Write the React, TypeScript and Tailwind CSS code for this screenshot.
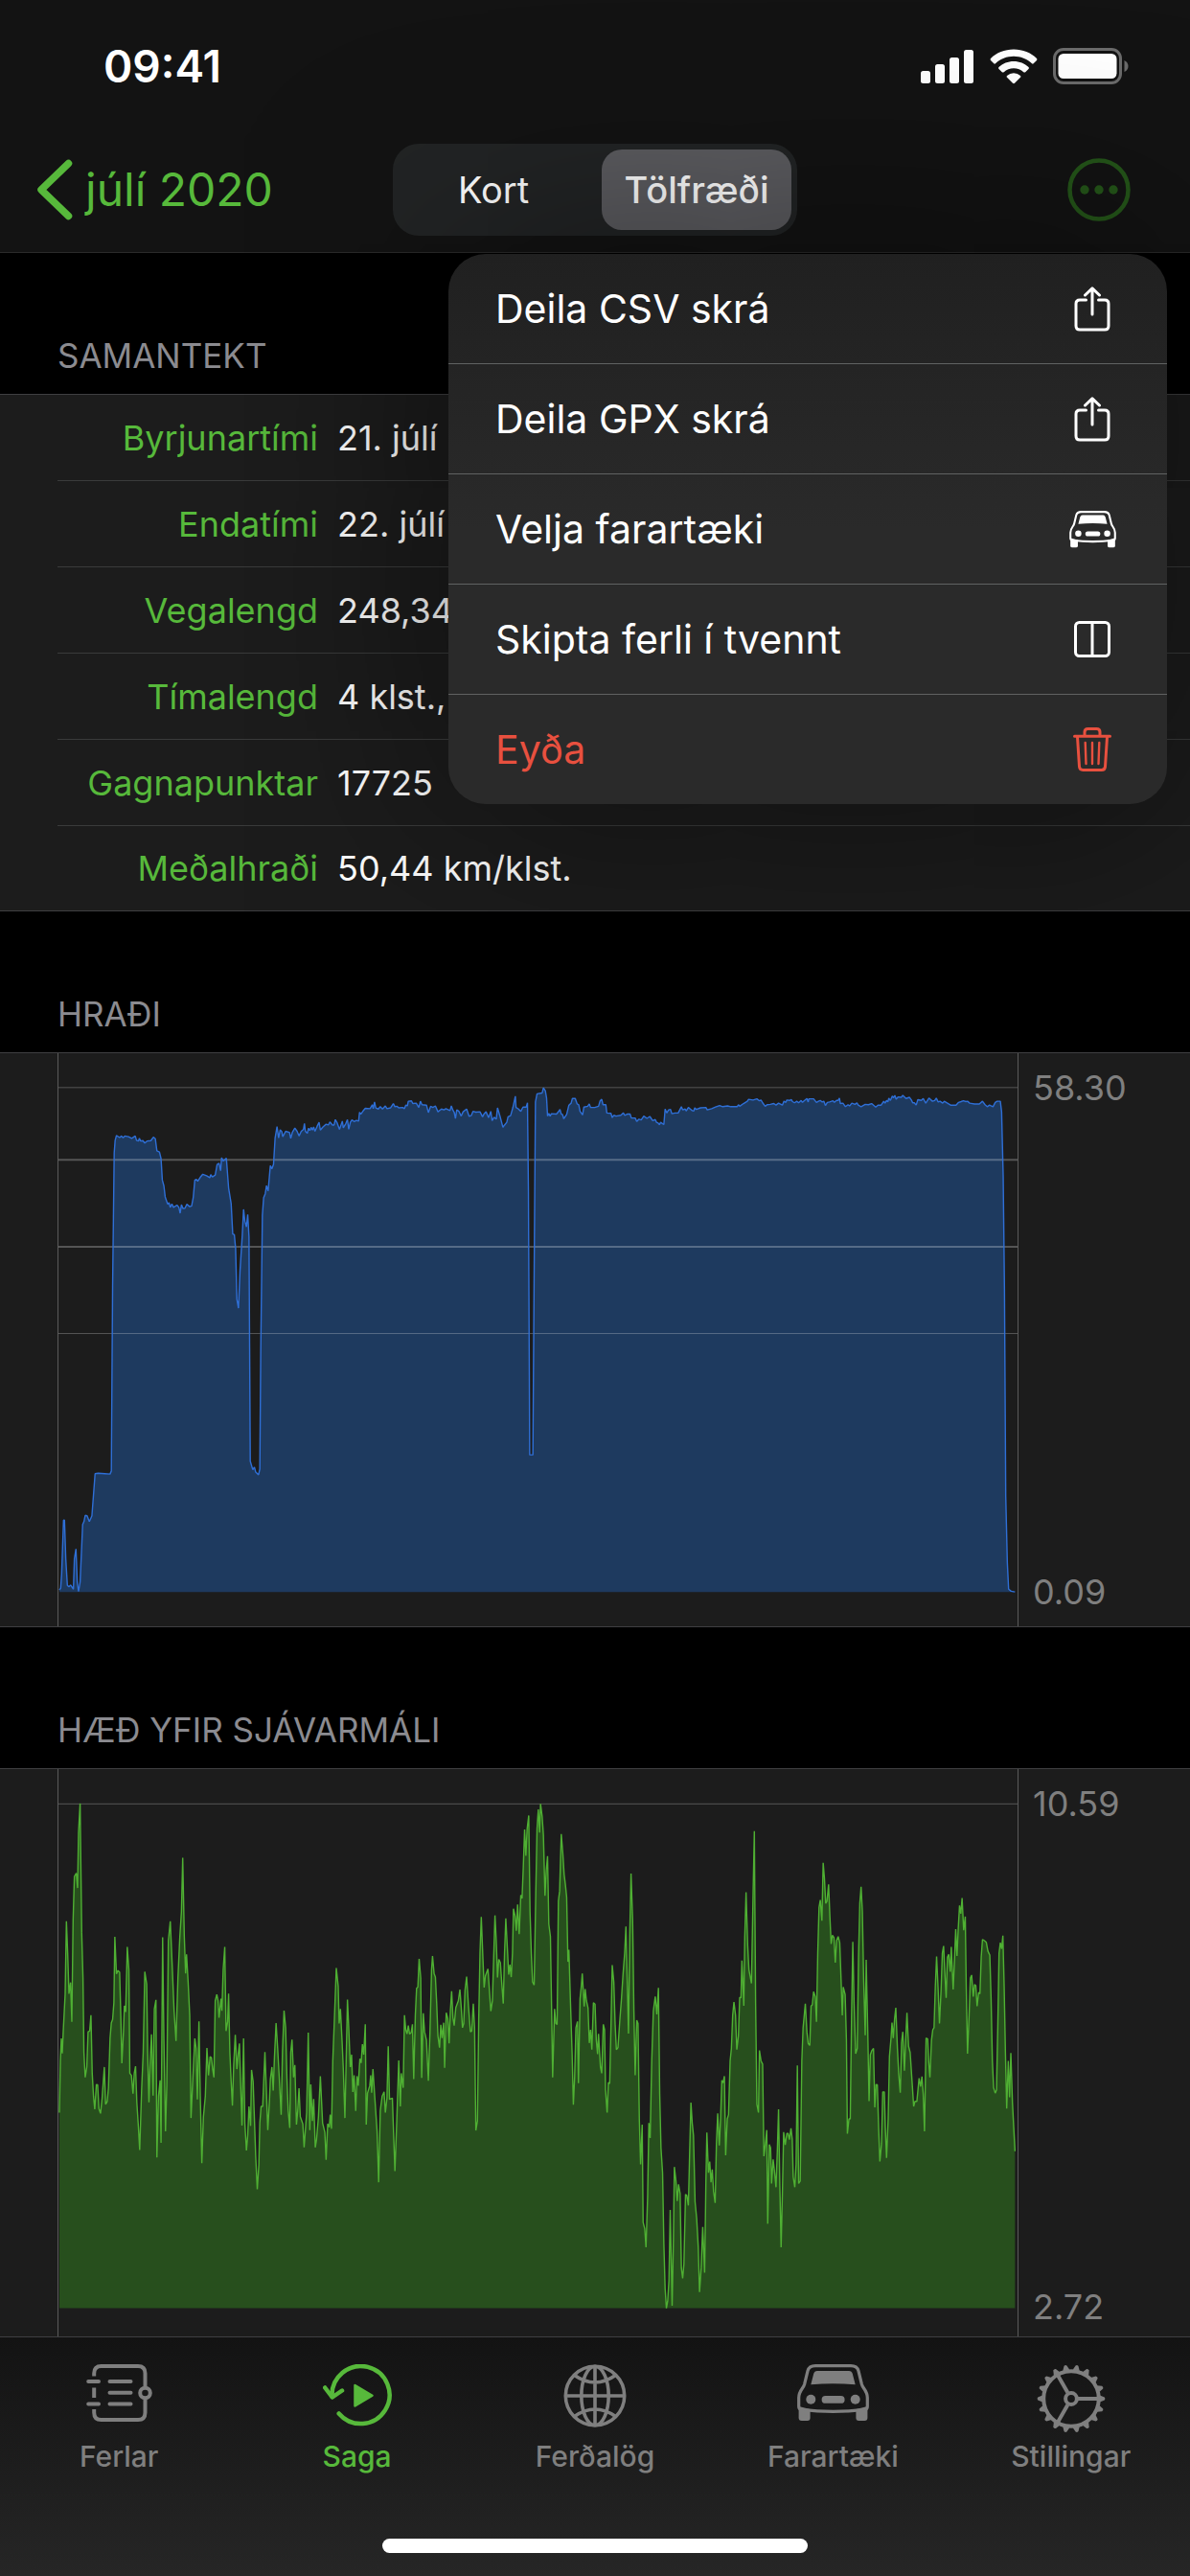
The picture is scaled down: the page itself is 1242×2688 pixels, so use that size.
import type { ReactNode } from "react";

type Run = { start: number; points: string };

// Each run lists "x,y" samples with x relative to the start of the run.
const speedRuns: Run[] = [
  {
    start: 0,
    points:
      "183,1420 187,1415 190,1380 196,1241 199,1241 203,1340 208,1408 213,1412 218,1407 223,1413 227,1418 230,1340 235,1315 239,1400 243,1424 248,1400 256,1252 260,1245 264,1229 270,1230 277,1245 285,1230 295,1122 305,1121 325,1122 342,1123 346,1115 350,640 355,300 358,268 362,256 372,261 378,257 383,262 388,257 400,259 410,263 421,257 425,268 431,270 434,263 438,270 445,269 451,275 458,270 470,269 478,260 484,264 489,295 497,298 502,315 506,370 511,385 515,413 523,432 527,428 531,440 536,431 541,440 552,434 558,440 562,455 566,433 571,443 577,442 583,432 592,438 598,436 603,415 608,370 613,368 617,373 625,363 633,355 645,359 655,364 658,356 663,362 672,357 678,330 684,327 689,346 692,313 697,321 707,314 714,390 722,430 727,508 732,510 736,545 740,675 745,698 750,600 757,510 761,445 765,475 770,490 774,458 778,515 780,800 782,1090 790,1112 795,1105 799,1118 808,1125 812,1110 815,800 820,460 824,415 829,405 833,384 838,398 845,333 850,341 855,330 860,262 866,233 871,262 876,241 881,246 884,259 893,245 905,248 909,263 914,248 922,237 929,245 935,257 942,245 949,240 952,225 955,245 961,250 965,237 969,243 973,235 977,242 981,234 985,245 992,232 998,222 1002,242 1010,234 1020,227 1027,229 1032,221 1040,229 1045,229 1049,215 1055,224 1062,240 1071,219 1074,236 1082,225 1087,215 1091,240 1096,222 1101,216 1108,220 1115,217 1122,219 1125,196 1129,201 1136,193 1143,186 1158,187 1165,177 1168,187 1172,170 1176,185 1184,188 1190,182 1197,188 1206,180 1211,187 1222,185 1231,174 1236,182 1243,181 1248,185 1260,184",
  },
  {
    start: 1200,
    points:
      "66,187 70,178 75,180 78,168 88,167 92,174 103,173 111,184 116,168 121,177 135,178 141,197 148,181 155,184 163,180 171,195 182,188 190,190 196,187 209,192 213,180 218,191 222,196 226,212 230,190 237,194 244,206 250,195 261,188 269,207 276,204 281,194 290,196 303,195 311,208 316,200 322,195 330,210 337,194 341,218 347,209 354,214 358,185 366,207 375,235 380,229 387,222 391,208 399,205 406,185 414,155 416,184 424,188 431,194 438,183 448,183 452,172 455,400 459,1074 469,1074 473,600 477,170 482,149 498,147 502,134 508,141 512,160 515,206 519,199 523,206 527,200 543,201 551,193 554,189 558,201 562,202 566,213 575,202 582,178 589,173 593,161 602,161 608,175 613,177 617,194 625,203 629,183 641,181 646,175 650,184 663,184 675,181 680,167 685,163 689,177 698,177 701,198 714,199 718,210 723,204 730,206 745,204 753,198 757,204 765,201 774,201 778,211 790,211 795,220 802,214 809,216 817,206 827,212 836,207 845,218 853,215 857,222 862,224 866,228 870,222 880,228 884,188 889,198 895,190 901,189 905,200 915,198 925,198 930,190 935,182 939,190 947,188 950,193 957,184 963,188 969,192 974,193 977,185 982,189 995,185 1012,184 1016,190 1030,187 1042,183 1055,179 1065,182 1080,180 1090,182 1110,182 1114,177 1118,181 1130,174 1142,168 1146,163 1160,165 1172,162 1180,167 1185,165 1190,172 1198,181 1204,177 1214,176 1225,174 1232,178 1240,173",
  },
  {
    start: 2400,
    points:
      "52,178 57,168 63,171 66,165 75,166 80,164 84,169 90,172 97,168 103,172 111,166 115,171 120,167 129,161 133,170 135,162 150,162 159,171 165,168 171,166 177,170 182,168 187,179 193,171 200,170 211,167 215,171 222,166 227,166 231,160 234,174 242,173 250,182 258,177 263,180 270,173 280,176 286,172 290,178 299,182 312,176 322,177 332,174 345,183 352,178 362,178 370,168 374,173 379,166 383,170 386,160 391,166 397,155 401,159 405,153 409,163 415,157 425,158 430,153 440,161 451,158 457,165 461,172 466,172 472,178 477,164 488,166 494,161 502,173 512,160 523,168 530,166 535,160 541,170 547,168 555,173 560,168 570,173 580,178 597,178 605,171 613,169 620,167 628,169 633,168 640,173 655,175 670,175 680,168 688,177 695,182 702,178 713,182 720,171 726,168 736,168 740,195 745,360 749,650 753,1180 758,1350 762,1418 770,1423 782,1425",
  },
];

const altitudeRuns: Run[] = [
  {
    start: 0,
    points:
      "183,1025 186,900 189,846 192,882 195,830 201,740 205,563 209,640 213,738 218,711 222,806 226,560 230,455 236,447 240,483 243,350 248,279 253,590 257,700 260,880 264,940 269,915 273,830 278,828 282,790 286,930 290,985 294,1017 299,957 303,958 307,1015 312,1027 317,990 324,915 328,1005 333,998 337,965 342,845 346,808 350,800 354,760 357,601 362,690 367,682 372,686 376,800 379,906 384,830 387,767 391,782 396,625 401,680 404,930 409,935 414,979 418,930 422,913 426,1000 431,1060 435,1115 441,970 446,880 451,685 457,715 460,880 464,1000 468,900 472,836 477,984 481,775 486,753 489,1133 494,985 499,947 502,1098 507,602 511,850 516,1070 520,960 525,610 531,563 537,670 543,780 549,852 555,700 561,600 566,540 570,410 575,600 579,689 582,643 587,710 592,790 596,1038 602,940 608,846 612,870 616,993 621,805 625,980 630,1147 635,1035 641,985 646,869 651,935 656,890 660,892 664,920 668,940 672,755 677,740 681,755 684,796 690,750 693,779 697,680 702,625 706,828 711,805 714,738 718,880 722,950 726,1008 730,910 735,837 740,920 744,885 748,858 752,960 756,1056 761,846 765,1050 770,1116 774,1080 778,1010 783,1057 786,922 791,950 795,1040 799,1130 804,1210 809,1150 812,1050 816,1010 821,1010 828,879 833,980 837,1067 842,1000 845,945 850,915 854,972 858,890 863,809 868,870 873,940 879,1030 883,880 888,779 893,820 897,940 901,1020 906,1062 909,880 913,849 918,940 922,910 927,1054 931,1020 935,966 939,1035 947,1052 951,1109 959,1025 964,832 969,1067 972,957 977,1045 981,992 986,1109 990,1090 996,1035 1002,937 1009,1050 1016,1072 1020,1139 1025,1052 1030,1060 1033,1030 1037,1064 1041,900 1046,800 1052,676 1058,720 1061,810 1065,775 1070,850 1074,920 1079,1038 1083,900 1087,752 1091,820 1096,915 1100,885 1104,975 1108,935 1113,1021 1117,937 1121,960 1126,895 1130,905 1134,860 1138,885 1143,812 1146,1054 1150,978 1157,960 1160,935 1163,977 1167,920 1173,990 1180,1070 1185,1193 1190,1020 1196,985 1202,975 1206,1025 1211,990 1215,865 1219,993 1228,990 1232,1080 1236,1166 1242,1040 1248,899 1253,1010 1256,930 1260,955",
  },
  {
    start: 1200,
    points:
      "62,965 66,790 70,825 74,835 78,815 82,835 87,832 91,812 95,944 100,790 104,725 108,722 112,654 117,700 120,941 125,785 129,830 135,850 141,948 146,830 151,680 154,647 159,690 163,698 167,760 171,840 176,868 180,813 184,845 189,808 192,917 197,784 202,798 206,858 210,780 214,732 218,795 222,815 227,772 235,755 240,728 244,770 248,820 252,810 256,730 261,697 267,770 273,830 277,828 282,762 286,820 290,1068 295,1045 299,800 303,640 307,553 312,650 316,723 320,695 328,678 333,735 337,780 342,755 346,650 350,549 354,610 358,699 362,655 367,663 371,710 376,762 380,640 384,556 389,630 393,692 397,668 401,698 405,640 408,533 413,550 417,586 421,523 426,594 431,500 435,508 439,430 443,342 447,405 451,340 456,308 460,540 464,640 468,710 473,717 478,500 482,340 486,293 490,349 493,280 498,310 502,355 507,502 511,440 515,406 519,570 524,600 527,740 531,940 537,775 541,810 545,812 549,515 553,490 558,353 563,400 567,450 571,475 575,505 579,661 582,632 587,760 592,880 596,1006 600,940 604,820 609,805 612,954 617,750 621,720 624,689 630,769 633,727 637,755 642,772 646,857 650,825 654,873 659,760 664,763 668,850 672,884 675,835 681,915 685,930 690,812 694,825 697,970 702,1025 706,952 710,955 714,820 718,669 723,710 727,810 731,873 736,868 742,800 747,750 752,690 757,640 761,576 765,700 769,834 773,600 777,448 782,560 786,780 790,935 795,802 799,810 803,1040 807,1150 812,1054 815,1290 820,1305 824,1350 829,1230 833,1050 837,1086 842,900 847,780 853,745 858,788 863,724 867,980 871,1110 876,1170 880,1340 884,1450 888,1497 892,1480 896,1430 900,1260 906,1491 910,1330 913,1156 918,1190 922,1238 926,1198 931,1220 935,1400 939,1425 943,1390 948,1222 952,1225 957,1249 961,1120 965,1001 969,1050 973,1080 978,1240 983,1280 988,1350 992,1458 997,1400 1002,1301 1008,1411 1012,1190 1015,1073 1020,1170 1024,1143 1028,1193 1032,1162 1036,1215 1041,1243 1045,1100 1049,1027 1054,1104 1058,1040 1062,947 1066,953 1070,937 1074,1128 1079,1040 1083,1030 1088,900 1092,870 1096,790 1100,758 1105,790 1109,873 1114,840 1118,747 1122,748 1125,658 1131,767 1134,600 1138,493 1143,620 1147,680 1155,713 1160,500 1164,346 1168,760 1172,1005 1177,1025 1180,875 1185,900 1190,908 1194,1130 1198,1105 1203,1067 1206,1293 1211,1102 1215,1110 1218,1196 1223,1138 1227,1165 1232,1205 1236,1120 1240,1017 1244,1200 1248,1350 1252,1220 1256,1072",
  },
  {
    start: 2400,
    points:
      "61,1103 66,1075 70,1075 74,1090 79,1063 83,1090 86,1180 91,1205 95,1150 99,911 103,1196 108,1190 113,900 117,820 124,762 129,830 133,858 138,863 142,768 146,765 150,733 155,745 159,806 163,640 167,530 171,512 176,562 180,422 184,460 188,520 192,515 197,474 201,550 205,618 209,597 214,603 218,663 222,610 227,600 232,615 236,700 240,790 243,722 249,740 253,850 256,1076 261,1040 265,1040 269,800 273,613 277,760 282,883 287,870 291,650 295,520 299,480 303,540 307,700 312,838 315,656 320,830 324,997 328,885 333,875 338,870 342,1012 346,957 350,958 354,1060 358,1143 363,1100 367,975 372,975 375,1060 379,1134 384,1040 388,890 393,845 396,808 400,845 404,800 408,772 413,870 417,930 422,977 426,855 430,830 435,924 439,850 443,784 448,865 453,880 459,950 464,1010 468,998 474,998 481,942 486,962 490,938 494,980 498,1070 503,845 508,847 511,900 515,940 520,850 524,825 528,820 532,720 536,648 541,730 545,810 550,730 554,640 558,623 562,690 566,748 570,650 574,643 579,685 582,625 588,728 592,660 596,582 600,647 604,580 608,525 612,545 616,507 621,585 626,552 629,720 633,883 638,790 642,700 646,693 651,745 655,716 659,718 663,768 668,735 672,738 676,650 680,607 686,610 692,614 697,635 703,645 707,750 711,900 715,965 720,978 724,970 728,820 732,640 736,615 740,630 744,598 748,720 752,880 756,1015 761,900 765,988 769,881 774,1000 778,1060 782,1118",
  },
];

const joinRuns = (runs: Run[]) =>
  runs
    .flatMap(({ start, points }) =>
      points.split(" ").map((pair) => {
        const [x, y] = pair.split(",").map(Number);
        return `${x + start},${y}`;
      }),
    )
    .join(" ");

type ChartProps = {
  label: string;
  runs: Run[];
  viewBox: string;
  base: number;
  grid: { y: number; width: number }[];
  fill: string;
  stroke: string;
  className: string;
  max: string;
  min: string;
};

function Chart({ label, runs, viewBox, base, grid, fill, stroke, className, max, min }: ChartProps) {
  const line = joinRuns(runs);
  return (
    <div className={`flex border-t border-[#3f3f41] bg-[#1c1c1c] pl-[60px] ${className}`}>
      <svg
        role="img"
        aria-label={label}
        viewBox={viewBox}
        preserveAspectRatio="none"
        className="h-full min-w-0 flex-1 border-x border-[#5a5a5a]"
      >
        <polygon points={`183,${base} ${line} 3182,${base}`} fill={fill} />
        {grid.map(({ y, width }) => (
          <line
            key={y}
            x1="180"
            x2="3190"
            y1={y}
            y2={y}
            stroke="#fff"
            strokeOpacity="0.25"
            strokeWidth={width}
            vectorEffect="non-scaling-stroke"
          />
        ))}
        <polyline
          points={line}
          fill="none"
          stroke={stroke}
          strokeWidth="1.4"
          strokeLinejoin="bevel"
          vectorEffect="non-scaling-stroke"
        />
      </svg>
      <div className="flex w-[179px] flex-col justify-between pl-[15px] text-[36px] leading-10 text-[#7f7f7f]">
        <span>{max}</span>
        <span>{min}</span>
      </div>
    </div>
  );
}

function CarIcon({ className }: { className: string }) {
  return (
    <svg viewBox="0 0 75 60" className={className} fill="currentColor" aria-hidden="true">
      <path
        d="M19 1.7H56Q62.5 1.7 64 7L67.4 21Q68 23 69.5 25C72 28.500 73.300 31 73.300 35V44Q73.300 47 70.500 47.300Q37.500 51.500 4.500 47.300Q1.700 47 1.700 44V35C1.700 31 3 28.500 5.500 25Q7 23 7.600 21L11 7Q12.500 1.700 19 1.700Z"
        fill="none"
        stroke="currentColor"
        strokeWidth="3.2"
      />
      <path d="M14.300 21.300L17.200 10Q18 7 21 7H54Q57 7 57.800 10L60.700 21.300Q37.500 19 14.300 21.300Z" />
      <circle cx="14.300" cy="36.700" r="5" />
      <circle cx="60.700" cy="36.700" r="5" />
      <rect x="25.600" y="33" width="24" height="7.800" rx="3.900" />
      <path d="M1.600 44L13.600 47V56Q13.600 59 10.600 59H4.600Q1.600 59 1.600 56Z" />
      <path d="M73.400 44L61.400 47V56Q61.400 59 64.400 59H70.400Q73.400 59 73.400 56Z" />
    </svg>
  );
}

function ShareIcon() {
  return (
    <svg
      viewBox="0 0 38 47"
      className="h-[47px] w-[38px]"
      fill="none"
      stroke="currentColor"
      strokeWidth="3"
      strokeLinecap="round"
      strokeLinejoin="round"
      aria-hidden="true"
    >
      <path d="M12.500 14H6Q2 14 2 18V41Q2 45 6 45H32Q36 45 36 41V18Q36 14 32 14H25.500" />
      <path d="M19 29V2M11.500 9L19 1.800L26.500 9" />
    </svg>
  );
}

function SplitIcon() {
  return (
    <svg viewBox="0 0 38 38" className="size-[38px]" fill="none" stroke="currentColor" strokeWidth="3" aria-hidden="true">
      <rect x="1.500" y="1.500" width="35" height="35" rx="4" />
      <path d="M19 2V36" />
    </svg>
  );
}

function TrashIcon() {
  return (
    <svg
      viewBox="0 0 40 46"
      className="h-[46px] w-10"
      fill="none"
      stroke="currentColor"
      strokeWidth="3"
      strokeLinecap="round"
      strokeLinejoin="round"
      aria-hidden="true"
    >
      <path d="M1.500 9.300H38.500M12 9V5Q12 1.500 15.500 1.500H24.500Q28 1.500 28 5V9" />
      <path d="M4.500 10L6.500 41Q6.800 44.500 10.300 44.500H29.700Q33.200 44.500 33.500 41L35.500 10" />
      <path d="M12.700 16L13.500 38M20 16V38M27.300 16L26.500 38" strokeWidth="2.400" />
    </svg>
  );
}

function NotebookIcon() {
  return (
    <svg
      viewBox="0 0 69 60"
      className="h-[60px] w-[69px]"
      fill="none"
      stroke="currentColor"
      strokeWidth="4"
      strokeLinecap="round"
      aria-hidden="true"
    >
      <path
        d="M8.200 12.500V9.500Q8.200 2 15.700 2H54Q61.500 2 61.500 9.500V23M61.500 37V50.500Q61.500 58 54 58H15.700Q8.200 58 8.200 50.500V47M8.200 24.500V35"
        strokeLinecap="butt"
      />
      <circle cx="61.500" cy="30" r="5.300" />
      <path d="M2.200 18H13M2.200 41.500H13M24.500 18H46.500M24.500 29.700H46.500M24.500 41.500H46.500" />
    </svg>
  );
}

function HistoryIcon() {
  return (
    <svg
      viewBox="0 0 72 65"
      className="h-[65px] w-[72px]"
      fill="none"
      stroke="currentColor"
      strokeWidth="4.500"
      strokeLinecap="round"
      strokeLinejoin="round"
      aria-hidden="true"
    >
      <path d="M9.600 34A30 30 0 1 1 16.700 51.500" />
      <path d="M2.200 24.500L9.800 34.500L20 27.500" />
      <path d="M33.500 22V43.500L51.500 32.700Z" fill="currentColor" strokeWidth="2.500" />
    </svg>
  );
}

function GlobeIcon() {
  return (
    <svg viewBox="-33 -33 66 66" className="size-[66px]" fill="none" stroke="currentColor" strokeWidth="3.600" aria-hidden="true">
      <circle r="30.700" />
      <ellipse rx="14.200" ry="30.700" />
      <path d="M0 -30V30M-30 0H30M-21.500 -21.500Q0 -6.500 21.500 -21.500M-21.500 21.500Q0 6.500 21.500 21.500" />
    </svg>
  );
}

const teeth = Array.from({ length: 18 }, (_, i) => i * 20);

function GearIcon() {
  return (
    <svg viewBox="-36 -36 72 72" className="size-[72px]" fill="none" stroke="currentColor" strokeWidth="4" aria-hidden="true">
      <circle r="28.800" />
      <circle r="5.900" />
      <path d="M7 0H28M-3.700 -6.400L-14 -24.500M-3.700 6.400L-14 24.500" />
      {teeth.map((angle) => (
        <path
          key={angle}
          d="M30 -3.600L34.800 -1.500Q36 0 34.800 1.500L30 3.600Z"
          transform={`rotate(${angle})`}
          fill="currentColor"
          stroke="none"
        />
      ))}
    </svg>
  );
}

const summary = [
  ["Byrjunartími", "21. júlí"],
  ["Endatími", "22. júlí"],
  ["Vegalengd", "248,34"],
  ["Tímalengd", "4 klst.,"],
  ["Gagnapunktar", "17725"],
  ["Meðalhraði", "50,44 km/klst."],
];

const actions: { label: string; icon: ReactNode; danger?: boolean }[] = [
  { label: "Deila CSV skrá", icon: <ShareIcon /> },
  { label: "Deila GPX skrá", icon: <ShareIcon /> },
  { label: "Velja farartæki", icon: <CarIcon className="h-[39px] w-[49px]" /> },
  { label: "Skipta ferli í tvennt", icon: <SplitIcon /> },
  { label: "Eyða", icon: <TrashIcon />, danger: true },
];

const tabs: { label: string; icon: ReactNode; active?: boolean }[] = [
  { label: "Ferlar", icon: <NotebookIcon /> },
  { label: "Saga", icon: <HistoryIcon />, active: true },
  { label: "Ferðalög", icon: <GlobeIcon /> },
  { label: "Farartæki", icon: <CarIcon className="h-[60px] w-[75px]" /> },
  { label: "Stillingar", icon: <GearIcon /> },
];

function SectionTitle({ children }: { children: ReactNode }) {
  return (
    <h2 className="flex h-[147px] items-end pb-5 pl-[60px] text-[35px] leading-10 text-[#8b8b90]">{children}</h2>
  );
}

function StatusBar() {
  return (
    <div className="flex h-[138px] items-center justify-between pr-16 pl-[108px]">
      <span className="text-[46px] leading-[56px] font-semibold">09:41</span>
      <div className="flex items-center gap-4">
        <svg viewBox="0 0 56 36" className="h-9 w-14" fill="#fff" aria-hidden="true">
          <rect x="0" y="23" width="10" height="13" rx="2.500" />
          <rect x="15" y="16" width="10" height="20" rx="2.500" />
          <rect x="30" y="9" width="10" height="27" rx="2.500" />
          <rect x="45" y="1" width="10" height="35" rx="2.500" />
        </svg>
        <svg viewBox="0 0 50 37" className="h-[37px] w-[50px]" fill="#fff" aria-hidden="true">
          <path d="M25 0.500C34.500 0.500 43 4 49 10Q49.900 11 49 12L45.700 15.300Q44.800 16 44 15.200C39 10.500 32 7.800 25 7.800S11 10.500 6 15.200Q5.200 16 4.300 15.300L1 12Q0.100 11 1 10C7 4 15.500 0.500 25 0.500Z" />
          <path d="M25 13C31 13 36.500 15.200 40.500 19Q41.500 20 40.500 21L37.200 24.200Q36.300 25 35.300 24.200C32.500 21.700 29 20.300 25 20.300S17.500 21.700 14.700 24.200Q13.700 25 12.800 24.200L9.500 21Q8.500 20 9.500 19C13.500 15.200 19 13 25 13Z" />
          <path d="M25 25.300Q29 25.300 32 27.900Q33 28.800 32 29.800L26 35.800Q25 36.700 24 35.800L18 29.800Q17 28.800 18 27.900Q21 25.300 25 25.300Z" />
        </svg>
        <svg viewBox="0 0 79 38" className="h-[38px] w-[79px]" aria-hidden="true">
          <rect x="1.500" y="1.500" width="69" height="35" rx="9.500" fill="none" stroke="#6b6b6b" strokeWidth="3" />
          <rect x="5.500" y="6" width="61" height="26" rx="5.500" fill="#fff" />
          <path d="M74.500 13Q78.500 15 78.500 19T74.500 25Z" fill="#6b6b6b" />
        </svg>
      </div>
    </div>
  );
}

export default function App() {
  return (
    <div className="relative flex min-h-screen w-full flex-col overflow-hidden bg-black font-[Inter,sans-serif] text-white">
      <header className="h-[264px] border-b border-[#2a2a2a] bg-[#131313]">
        <StatusBar />
        <nav className="grid h-[120px] grid-cols-[1fr_auto_1fr] items-center px-[38px]">
          <a href="#juli" className="flex items-center gap-[13px] text-[48px] leading-[56px] text-[#57b93b]">
            <svg viewBox="0 0 38 64" className="h-16 w-[38px]" fill="none" aria-hidden="true">
              <path d="M33.500 4.500L5 32L33.500 59.500" stroke="currentColor" strokeWidth="7.500" strokeLinecap="round" strokeLinejoin="round" />
            </svg>
            júlí 2020
          </a>
          <div className="flex gap-3.5 rounded-[27px] bg-[#222425] p-1.5 text-[38px] leading-[48px]">
            <button type="button" className="h-[84px] w-[198px]">
              Kort
            </button>
            <button type="button" aria-pressed="true" className="h-[84px] w-[198px] rounded-[21px] bg-[#5c5c60] font-medium">
              Tölfræði
            </button>
          </div>
          <button type="button" aria-label="Meira" className="mr-6 justify-self-end text-[#245519]">
            <svg viewBox="0 0 66 66" className="size-[66px]" fill="currentColor" aria-hidden="true">
              <circle cx="33" cy="33" r="30.500" fill="none" stroke="currentColor" strokeWidth="4.500" />
              <circle cx="18" cy="33" r="4.700" />
              <circle cx="33" cy="33" r="4.700" />
              <circle cx="48" cy="33" r="4.700" />
            </svg>
          </button>
        </nav>
      </header>

      <main>
        <section>
          <SectionTitle>SAMANTEKT</SectionTitle>
          <dl className="border-y border-[#3f3f41] bg-[#1c1c1c] pl-[60px] text-[36px] leading-10">
            {summary.map(([name, value]) => (
              <div key={name} className="flex h-[90px] items-center gap-5 border-b border-[#3a3b3b] last:h-[88px] last:border-b-0">
                <dt className="w-[272px] text-right text-[#57b93b]">{name}</dt>
                <dd>{value}</dd>
              </div>
            ))}
          </dl>
        </section>

        <section>
          <SectionTitle>HRAÐI</SectionTitle>
          <Chart
            label="Hraði"
            runs={speedRuns}
            viewBox="180 45 3010 1468"
            base={1425}
            grid={[
              { y: 133, width: 1 },
              { y: 318, width: 2 },
              { y: 541, width: 2 },
              { y: 763, width: 1 },
            ]}
            fill="#1e3a5f"
            stroke="#2f6fd6"
            className="h-[600px] border-b [&>div]:py-4"
            max="58.30"
            min="0.09"
          />
        </section>

        <section>
          <SectionTitle>HÆÐ YFIR SJÁVARMÁLI</SectionTitle>
          <Chart
            label="Hæð yfir sjávarmáli"
            runs={altitudeRuns}
            viewBox="180 196 3010 1369"
            base={1497}
            grid={[{ y: 280, width: 1 }]}
            fill="#274f1d"
            stroke="#4fb033"
            className="h-[593px] [&>div]:pt-4 [&>div]:pb-[11px]"
            max="10.59"
            min="2.72"
          />
        </section>
      </main>

      <footer className="relative mt-auto flex h-[250px] flex-col items-center justify-between border-t border-[#3f3f41] bg-linear-to-b from-[#131313] to-[#262626] pb-6">
        <nav className="grid w-full grid-cols-5 pt-7">
          {tabs.map(({ label, icon, active }) => (
            <a
              key={label}
              href={`#${label}`}
              className={`flex flex-col items-center text-[30px] leading-9 font-medium ${active ? "text-[#57b93b]" : "text-[#7f7f7f]"}`}
            >
              <span className="flex h-[78px] items-start">{icon}</span>
              {label}
            </a>
          ))}
        </nav>
        <div className="h-[15px] w-[444px] rounded-full bg-white" />
      </footer>

      <ul
        role="menu"
        className="absolute top-[265px] right-6 w-[750px] overflow-hidden rounded-[39px] bg-linear-to-b from-[#202020] via-[#2a2a2a] to-[#2a2a2a] shadow-[0_0_220px_rgba(0,0,0,0.6)]"
      >
        {actions.map(({ label, icon, danger }) => (
          <li key={label} role="none" className="border-b border-[#606262] last:border-b-0">
            <button
              type="button"
              role="menuitem"
              className={`flex h-[114px] w-full items-center justify-between pr-[38px] pl-[49px] text-[41px] leading-[50px] ${danger ? "text-[#e8503f]" : "text-white"}`}
            >
              {label}
              <span className="flex w-20 justify-center">{icon}</span>
            </button>
          </li>
        ))}
      </ul>
    </div>
  );
}
